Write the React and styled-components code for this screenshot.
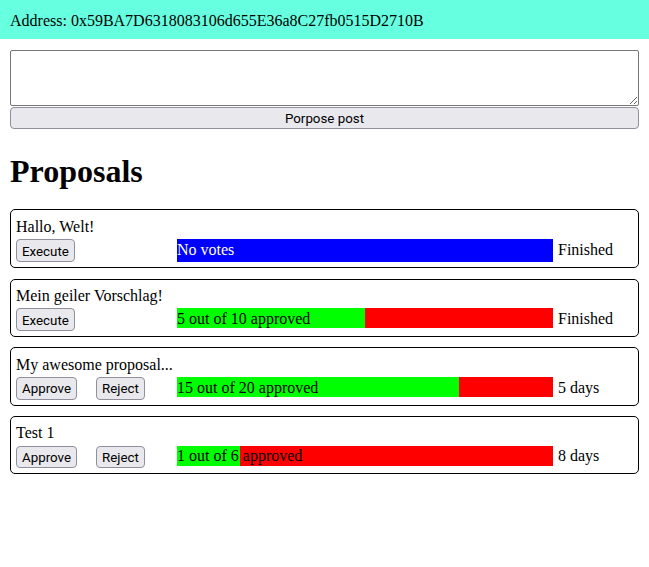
import React from "react";
import styled, { createGlobalStyle } from "styled-components";

const Global = createGlobalStyle`
  html, body { margin: 0; padding: 0; background: #fff; }
  body { font-family: "Liberation Serif", "Times New Roman", serif; font-size: 16px; color: #000; }
`;

const Header = styled.header`
  background: #66ffe0;
  padding: 12px 10px 8.6px;
  line-height: normal;
`;

const Main = styled.main`
  padding: 11px 10px 10px;
`;

const TextArea = styled.textarea`
  display: block;
  box-sizing: border-box;
  width: 100%;
  height: 56px;
  margin: 0 0 1px;
  border: 1px solid #767676;
  border-radius: 2px;
  font-family: "Liberation Mono", monospace;
  font-size: 13.33px;
  padding: 2px;
`;

const Button = styled.button`
  box-sizing: border-box;
  height: ${(p) => p.$h || 23}px;
  padding: 1px 5px 0;
  border: 1px solid #8f8f9d;
  border-radius: 4px;
  background: #e9e9ed;
  color: #000;
  font-family: Roboto, "Liberation Sans", sans-serif;
  font-size: 13.33px;
  line-height: normal;
  cursor: pointer;
  justify-self: start;
`;

const WideButton = styled(Button)`
  display: block;
  width: 100%;
`;

const Title = styled.h1`
  font-size: 32px;
  font-weight: bold;
  line-height: normal;
  margin: 22.44px 0 19.44px;
  padding-top: 2px;
`;

const List = styled.div`
  display: flex;
  flex-direction: column;
  gap: 10.2px;
`;

const Card = styled.div`
  border: 1px solid #000;
  border-radius: 5px;
  padding: 5px;
`;

const CardTitle = styled.div`
  line-height: normal;
  padding-top: 2.5px;
  margin-bottom: 3.4px;
`;

const Row = styled.div`
  display: grid;
  grid-template-columns: 80px 81px 376px auto;
  align-items: start;
`;

const Bar = styled.div`
  grid-column: 3;
  position: relative;
  display: flex;
  height: ${(p) => p.$h}px;
  background: ${(p) => p.$bg || "transparent"};
`;

const Segment = styled.div`
  height: 100%;
  background: ${(p) => p.$color};
`;

const BarLabel = styled.span`
  position: absolute;
  left: 0;
  top: 1.5px;
  white-space: nowrap;
  line-height: normal;
  color: ${(p) => p.$color || "#000"};
`;

const Status = styled.span`
  grid-column: 4;
  margin-left: 5px;
  padding-top: 1.5px;
  line-height: normal;
`;

const proposals = [
  { title: "Hallo, Welt!", actions: ["Execute"], yes: 0, total: 0, status: "Finished" },
  { title: "Mein geiler Vorschlag!", actions: ["Execute"], yes: 5, total: 10, status: "Finished" },
  { title: "My awesome proposal...", actions: ["Approve", "Reject"], yes: 15, total: 20, status: "5 days" },
  { title: "Test 1", actions: ["Approve", "Reject"], yes: 1, total: 6, status: "8 days" },
];

export default function App() {
  return (
    <>
      <Global />
      <Header>Address: 0x59BA7D6318083106d655E36a8C27fb0515D2710B</Header>
      <Main>
        <TextArea />
        <WideButton $h={22}>Porpose post</WideButton>
        <Title>Proposals</Title>
        <List>
          {proposals.map((p) => (
            <Card key={p.title}>
              <CardTitle>{p.title}</CardTitle>
              <Row>
                {p.actions.map((a) => (
                  <Button key={a} $h={p.total ? 22.5 : 23}>{a}</Button>
                ))}
                {p.total === 0 ? (
                  <Bar $h={23} $bg="#0000ff">
                    <BarLabel $color="#fff">No votes</BarLabel>
                  </Bar>
                ) : (
                  <Bar $h={20}>
                    <Segment $color="#00ff00" style={{ width: `${(p.yes / p.total) * 100}%` }} />
                    <Segment $color="#ff0000" style={{ width: `${(1 - p.yes / p.total) * 100}%` }} />
                    <BarLabel>{`${p.yes} out of ${p.total} approved`}</BarLabel>
                  </Bar>
                )}
                <Status>{p.status}</Status>
              </Row>
            </Card>
          ))}
        </List>
      </Main>
    </>
  );
}
